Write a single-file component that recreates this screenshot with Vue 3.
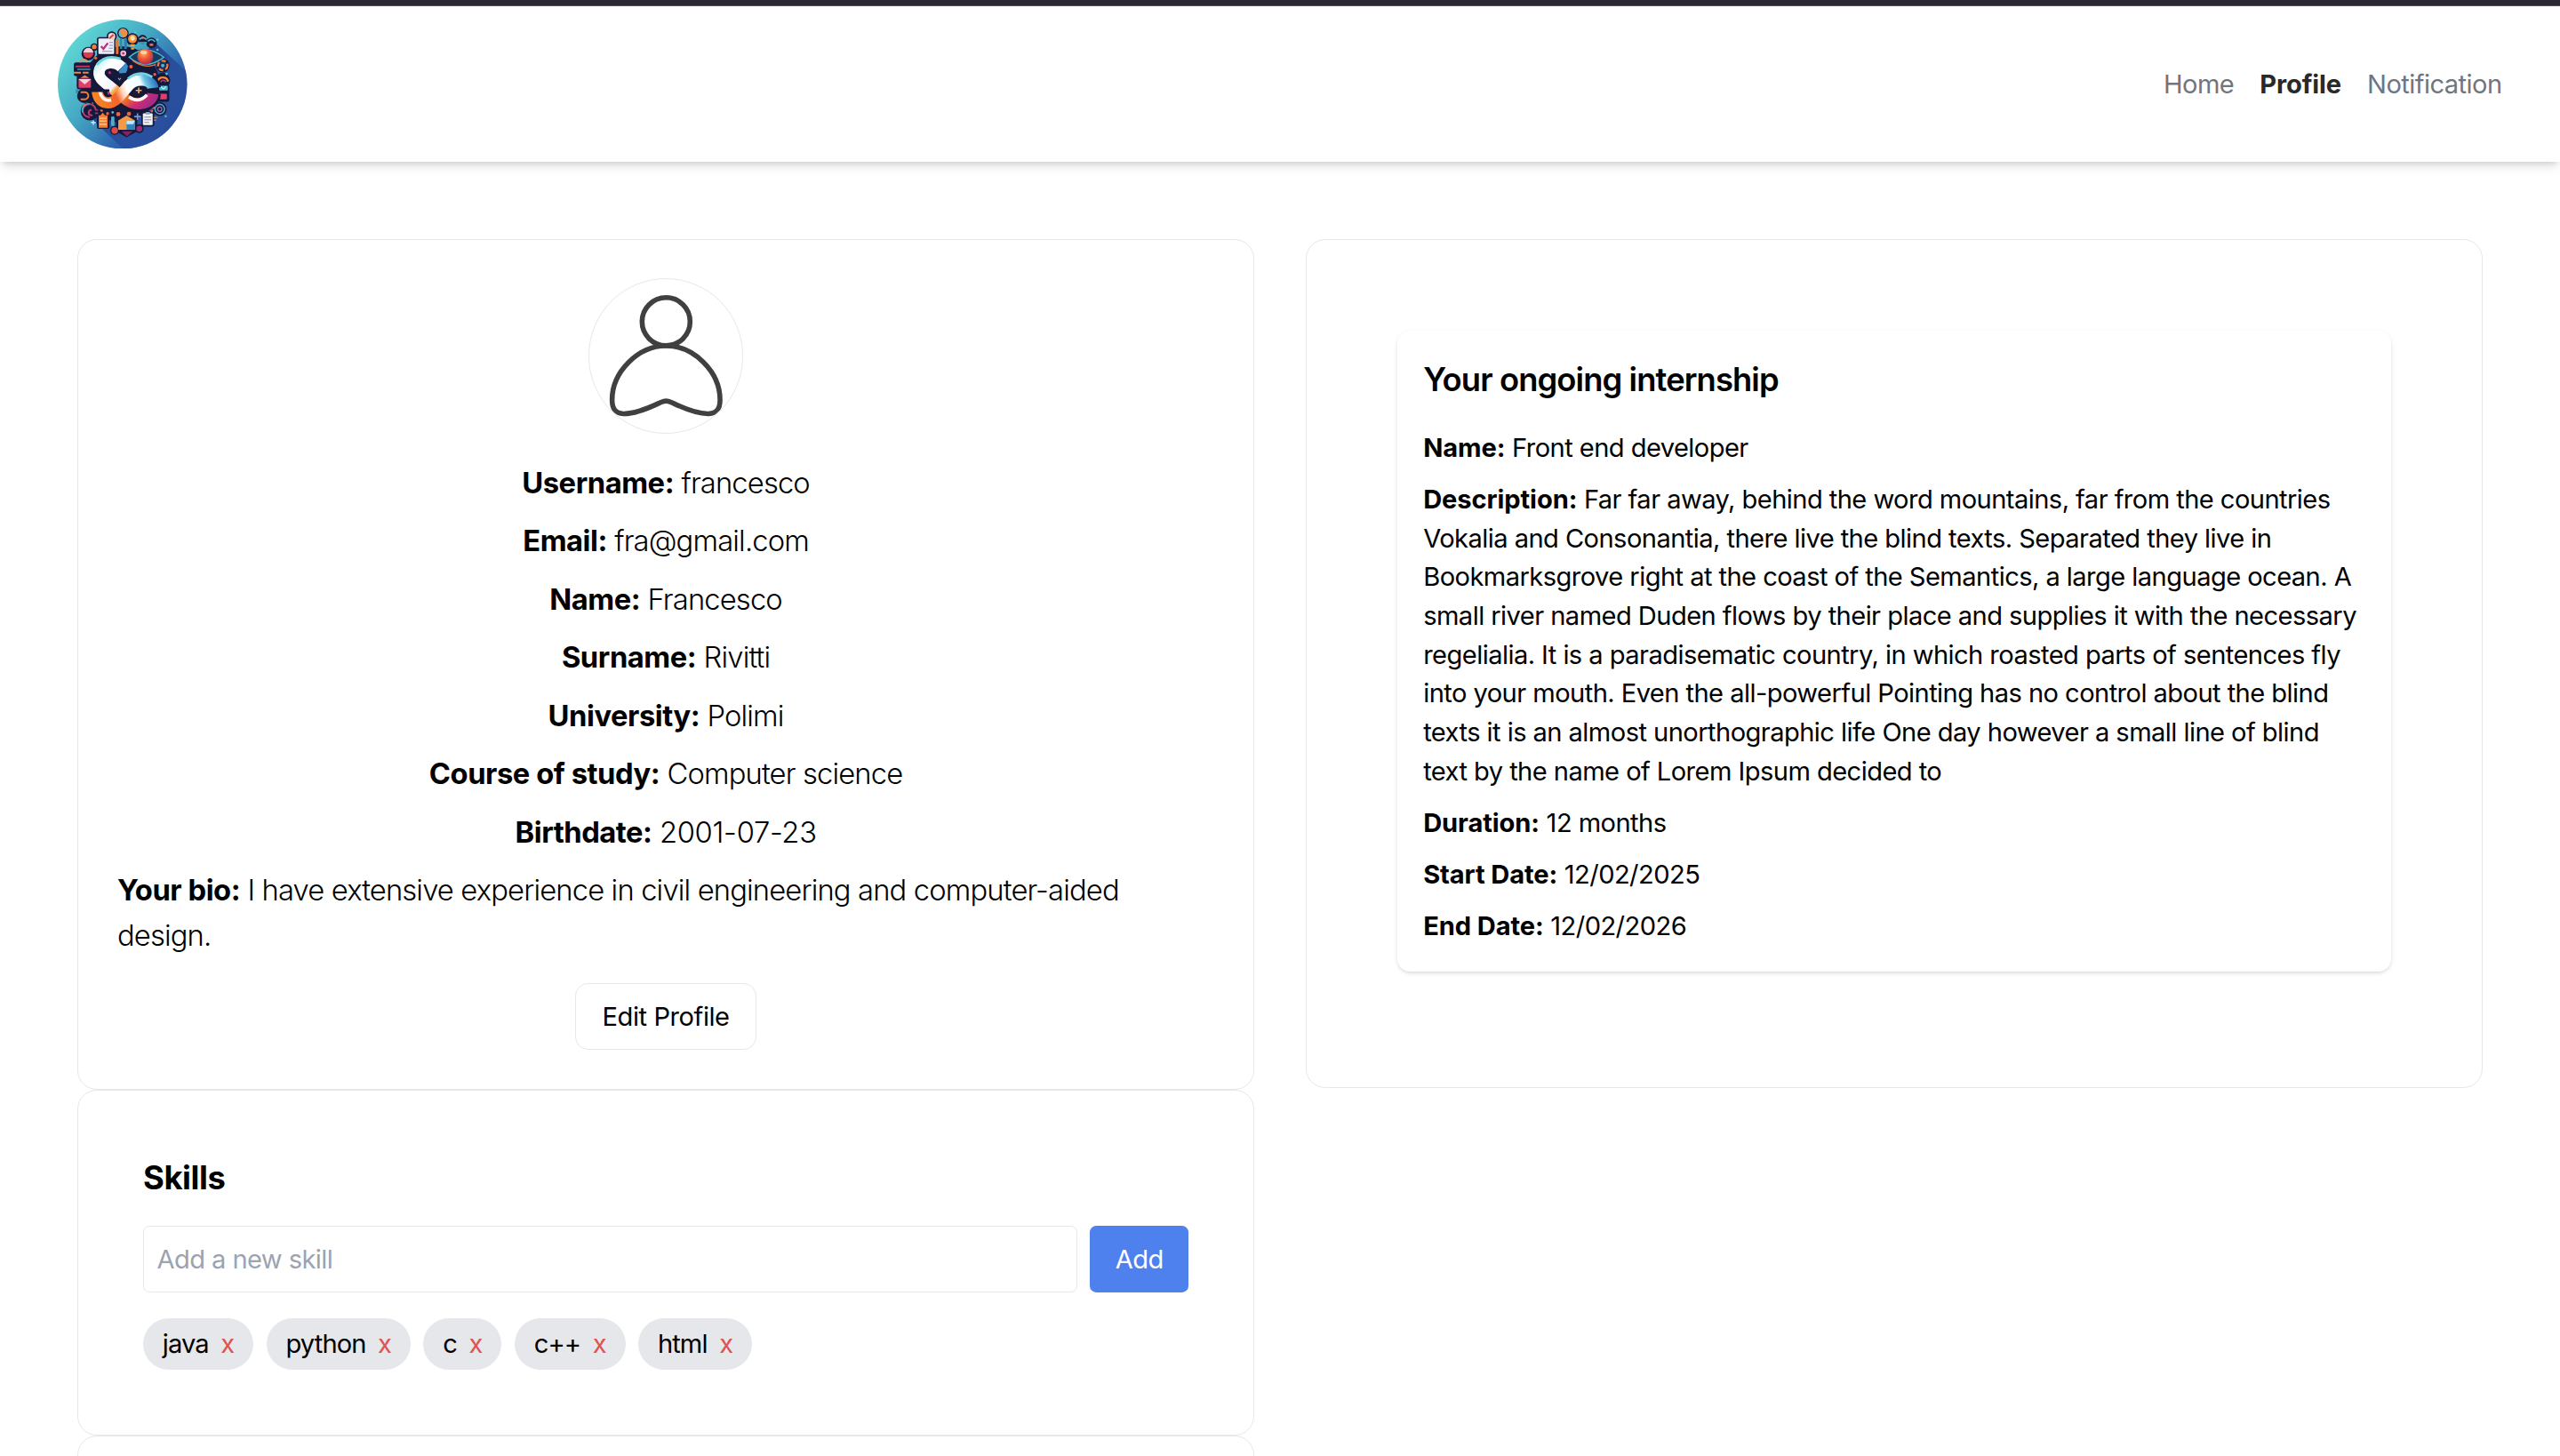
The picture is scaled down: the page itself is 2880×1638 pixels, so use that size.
<script setup>
import { ref } from 'vue'

const links = [
  { label: 'Home', active: false },
  { label: 'Profile', active: true },
  { label: 'Notification', active: false },
]

const profile = [
  ['Username:', 'francesco'],
  ['Email:', 'fra@gmail.com'],
  ['Name:', 'Francesco'],
  ['Surname:', 'Rivitti'],
  ['University:', 'Polimi'],
  ['Course of study:', 'Computer science'],
]

const description = [
  'Far far away, behind the word mountains, far from the countries',
  'Vokalia and Consonantia, there live the blind texts. Separated they live in',
  'Bookmarksgrove right at the coast of the Semantics, a large language ocean. A',
  'small river named Duden flows by their place and supplies it with the necessary',
  'regelialia. It is a paradisematic country, in which roasted parts of sentences fly',
  'into your mouth. Even the all-powerful Pointing has no control about the blind',
  'texts it is an almost unorthographic life One day however a small line of blind',
  'text by the name of Lorem Ipsum decided to',
]

const skills = ref(['java', 'python', 'c', 'c++', 'html'])
const newSkill = ref('')

function addSkill() {
  const name = newSkill.value.trim()
  if (name) skills.value.push(name)
  newSkill.value = ''
}

function removeSkill(index) {
  skills.value.splice(index, 1)
}
</script>

<template>
  <div class="page">
    <header class="navbar">
      <svg class="logo" viewBox="10 5 436 436">
        <defs>
          <linearGradient id="sky" x1="0.08" y1="0.15" x2="0.92" y2="0.85">
            <stop offset="0" stop-color="#62dcd6" />
            <stop offset="0.4" stop-color="#45a9c4" />
            <stop offset="0.7" stop-color="#2f69b0" />
            <stop offset="1" stop-color="#263f93" />
          </linearGradient>
          <linearGradient id="shade" x1="0" y1="0" x2="1" y2="1">
            <stop offset="0.3" stop-color="#24408f" />
            <stop offset="1" stop-color="#2c57a6" stop-opacity="0.35" />
          </linearGradient>
          <linearGradient id="ribbonDown" gradientUnits="userSpaceOnUse" x1="160" y1="140" x2="320" y2="300">
            <stop offset="0" stop-color="#c9f1f5" />
            <stop offset="0.12" stop-color="#ffffff" />
            <stop offset="0.4" stop-color="#f4f2fb" />
            <stop offset="0.46" stop-color="#f9a13c" />
            <stop offset="0.68" stop-color="#f06a26" />
            <stop offset="0.82" stop-color="#cf2d72" />
            <stop offset="1" stop-color="#a02a8a" />
          </linearGradient>
          <linearGradient id="ribbonUp" gradientUnits="userSpaceOnUse" x1="130" y1="290" x2="335" y2="200">
            <stop offset="0" stop-color="#f58a25" />
            <stop offset="0.36" stop-color="#f4632a" />
            <stop offset="0.48" stop-color="#ffd9bd" />
            <stop offset="0.56" stop-color="#ffffff" />
            <stop offset="0.78" stop-color="#eefbff" />
            <stop offset="0.85" stop-color="#6fc7e4" />
            <stop offset="1" stop-color="#2b74bd" />
          </linearGradient>
          <radialGradient id="iris" cx="0.4" cy="0.3" r="0.8">
            <stop offset="0" stop-color="#ffb45e" />
            <stop offset="0.45" stop-color="#ef5635" />
            <stop offset="1" stop-color="#a11f58" />
          </radialGradient>
          <clipPath id="disc"><circle cx="228" cy="223" r="218" /></clipPath>
        </defs>
        <g clip-path="url(#disc)">
          <rect width="456" height="450" fill="url(#sky)" />
          <path d="M335 80L456 190V450H240L130 345Z" fill="url(#shade)" />
          <g fill="#151a3c">
            <circle cx="225" cy="223" r="128" />
            <rect x="142" y="64" width="62" height="64" rx="8" />
            <circle cx="192" cy="62" r="17" />
            <circle cx="230" cy="51" r="19" />
            <circle cx="262" cy="72" r="21" />
            <circle cx="296" cy="72" r="15" />
            <circle cx="326" cy="84" r="18" />
            <path d="M246 132Q305 76 374 132Q305 188 246 132Z" />
            <circle cx="364" cy="160" r="23" />
            <circle cx="364" cy="210" r="25" />
            <rect x="346" y="224" width="40" height="58" rx="8" />
            <circle cx="354" cy="307" r="23" />
            <rect x="292" y="314" width="44" height="52" rx="7" />
            <path d="M206 330h72v52l-36 20l-36-20Z" />
            <circle cx="285" cy="373" r="15" />
            <circle cx="202" cy="379" r="15" />
            <rect x="142" y="316" width="42" height="58" rx="8" />
            <circle cx="118" cy="314" r="31" />
            <circle cx="100" cy="262" r="25" />
            <rect x="74" y="190" width="54" height="50" rx="8" />
            <rect x="64" y="150" width="66" height="46" rx="8" />
            <circle cx="113" cy="120" r="23" />
            <circle cx="133" cy="98" r="13" />
          </g>

          <!-- small objects scattered round the mark -->
          <rect x="147" y="69" width="53" height="52" rx="3" fill="#eeeefa" />
          <path d="M156 95l8 9l15-20" fill="none" stroke="#b8327b" stroke-width="7" />
          <path d="M184 82h12M184 92h12M160 112h34M182 102h14" stroke="#8790b8" stroke-width="3" />
          <circle cx="192" cy="62" r="12" fill="#f0d4cc" />
          <path d="M184 69l14-13" stroke="#d4454d" stroke-width="6" />
          <circle cx="230" cy="51" r="15" fill="#57b8cf" />
          <path d="M218 42a15 15 0 0 1 26 14q-4 9-14 10Z" fill="#f28b43" />
          <rect x="206" y="72" width="9" height="50" rx="3" fill="#ef7430" />
          <rect x="220" y="70" width="7" height="34" fill="#2d8aa5" />
          <rect x="234" y="70" width="9" height="34" fill="#3179a9" />
          <circle cx="231" cy="119" r="10" fill="#f0b9cf" />
          <circle cx="231" cy="119" r="4" fill="#a92866" />
          <circle cx="262" cy="70" r="15" fill="#f58d32" />
          <circle cx="262" cy="68" r="8" fill="#ffe0a8" />
          <path d="M254 88h16v8h-16zM257 100h10v6h-10z" fill="#f0a046" />
          <path d="M285 72q12-12 24 0M286 83h24M314 78q12-12 24 2" fill="none" stroke="#46bfd0" stroke-width="5" />
          <circle cx="296" cy="66" r="4" fill="#f17937" />
          <rect x="320" y="86" width="12" height="8" fill="#ef6a42" />

          <path d="M251 132Q305 82 368 132Q305 180 251 132Z" fill="#153c60" stroke="#48b3c8" stroke-width="5" />
          <path d="M262 143Q300 172 340 157" fill="none" stroke="#ef7838" stroke-width="4" />
          <circle cx="305" cy="130" r="27" fill="url(#iris)" />
          <ellipse cx="300" cy="116" rx="11" ry="6" fill="#ffd0a0" />

          <circle cx="364" cy="160" r="16" fill="#1c2c57" stroke="#f07a3c" stroke-width="7" stroke-dasharray="15 8" />
          <circle cx="364" cy="160" r="6" fill="#4ab6d2" />
          <path d="M347 214a18 18 0 0 1 35 0" fill="none" stroke="#f28740" stroke-width="7" />
          <path d="M357 216a9 9 0 0 1 17 0" fill="none" stroke="#c13274" stroke-width="5" />
          <rect x="352" y="228" width="29" height="16" rx="2" fill="#49bfd1" />
          <path d="M357 231l9 8l9-8" fill="none" stroke="#d9f6fa" stroke-width="3" />
          <rect x="355" y="255" width="23" height="19" rx="2" fill="#e33d70" />
          <circle cx="354" cy="307" r="16" fill="none" stroke="#4f9fc0" stroke-width="5" />
          <circle cx="354" cy="307" r="7" fill="none" stroke="#9b6abd" stroke-width="4" />
          <path d="M334 335h12M334 344h8" stroke="#f07d38" stroke-width="4" />
          <circle cx="374" cy="331" r="4" fill="#4ab9d3" />

          <rect x="297" y="321" width="33" height="40" rx="3" fill="#f1f1f6" />
          <rect x="306" y="317" width="15" height="8" rx="2" fill="#8ca1c0" />
          <path d="M302 334h23M302 343h23M302 352h16" stroke="#8990a4" stroke-width="3" />
          <path d="M279 321v22M268 332h22" stroke="#7799d7" stroke-width="5" />
          <path d="M214 345l28-16l28 16v32h-56Z" fill="#f49a42" />
          <path d="M242 346h28v31h-28Z" fill="#3384be" />
          <path d="M242 346h28l-5 12h-23Z" fill="#bde8f4" />
          <path d="M226 382h36l-19 17Z" fill="#832364" />
          <circle cx="285" cy="373" r="10" fill="#9c2b78" />
          <circle cx="202" cy="379" r="11" fill="#e3483f" />
          <rect x="190" y="332" width="11" height="32" rx="4" fill="#49b4c9" />
          <path d="M148 328h6l8-9l7 9h9v42h-30Z" fill="#f47c34" />
          <path d="M151 338h23M151 347h23M151 358h23" stroke="#ffd28b" stroke-width="4" />

          <path d="M138 309a22 22 0 1 0-20 25M124 310a9 9 0 1 0 3 17" fill="none" stroke="#c93570" stroke-width="6" />
          <path d="M94 318a22 22 0 0 1 22-29" fill="none" stroke="#47aec7" stroke-width="5" />
          <path d="M136 310h10M136 321h10" stroke="#b82a76" stroke-width="5" />
          <path d="M130 345v15M122 352h16" stroke="#c7eaf5" stroke-width="4" />
          <path d="M87 250h14a12 12 0 0 1 0 24h-14" fill="none" stroke="#ef7b3c" stroke-width="6" />
          <path d="M71 240h8v14h-8z" fill="#398ca7" />
          <rect x="80" y="204" width="42" height="31" rx="2" fill="#e33e68" />
          <path d="M80 206h42l-21 18Z" fill="#f4d8e2" />
          <path d="M86 202l15-10l15 10Z" fill="#f28340" />
          <path d="M70 163h48" stroke="#bd315b" stroke-width="6" />
          <path d="M64 184h24M94 184h20" stroke="#ee823f" stroke-width="6" />
          <path d="M84 149a14 14 0 0 1 26 0" fill="none" stroke="#f0904c" stroke-width="6" />
          <path d="M76 173h44" stroke="#3e9ab3" stroke-width="4" />
          <circle cx="113" cy="118" r="17" fill="#d93d55" />
          <path d="M96 116q4-15 17-16q14 1 17 16Z" fill="#f4cdd2" />
          <circle cx="133" cy="97" r="8" fill="#ef8144" />

          <g fill="#ee6540">
            <circle cx="257" cy="164" r="6" /><circle cx="138" cy="135" r="5" />
            <circle cx="337" cy="190" r="5" /><circle cx="100" cy="294" r="5" />
            <circle cx="214" cy="324" r="7" /><circle cx="178" cy="322" r="5" />
            <circle cx="158" cy="311" r="5" /><circle cx="250" cy="323" r="7" />
            <circle cx="333" cy="302" r="5" /><circle cx="327" cy="314" r="4" />
          </g>
          <g fill="#55c6d8">
            <circle cx="242" cy="163" r="4" /><circle cx="346" cy="107" r="4" />
            <circle cx="130" cy="285" r="4" /><circle cx="377" cy="188" r="4" />
            <circle cx="84" cy="141" r="4" /><circle cx="195" cy="318" r="4" />
            <circle cx="341" cy="285" r="4" /><circle cx="66" cy="216" r="4" />
            <circle cx="271" cy="48" r="4" /><circle cx="346" cy="73" r="4" />
          </g>

          <!-- interlocked ribbons -->
          <g fill="none" stroke="#141835" stroke-width="54">
            <path d="M143 246C147 291 190 298 216 266L244 233C270 198 327 205 331 236" />
            <path d="M226 166C203 143 163 146 151 173C141 201 167 216 190 234L234 270C262 300 326 295 331 255" />
          </g>
          <path d="M232 268C262 300 326 295 331 255" fill="none" stroke="url(#ribbonDown)" stroke-width="38" />
          <path d="M226 166C203 143 163 146 151 173C141 201 167 216 190 234L234 270" fill="none" stroke="url(#ribbonDown)" stroke-width="38" />
          <path d="M143 246C147 291 190 298 216 266L244 233C270 198 327 205 331 236" fill="none" stroke="url(#ribbonUp)" stroke-width="38" />
          <path d="M215 180L240 149Q250 170 240 185L219 186Z" fill="#3a8fcb" />
          <path d="M142 158Q170 120 222 137" fill="none" stroke="#6bd5de" stroke-width="8" />
          <path d="M246 205Q284 172 329 199" fill="none" stroke="#72d4e4" stroke-width="8" />
          <path d="M151 246Q160 283 190 276M250 266Q282 289 311 259" fill="none" stroke="#fff4ee" stroke-width="11" />
          <path d="M120 245h64M296 244h56" stroke="#141835" stroke-width="9" />
          <path d="M283 234v20M273 244h20" stroke="#f8a75a" stroke-width="5" />
          <circle cx="185" cy="184" r="5" fill="#a72d81" />
          <circle cx="182" cy="254" r="5" fill="#a72d81" />
          <path d="M214 202l4 6l5-6" fill="none" stroke="#74c9dc" stroke-width="3" />
        </g>
      </svg>
      <nav class="links">
        <a v-for="link in links" :key="link.label" :class="{ active: link.active }">{{ link.label }}</a>
      </nav>
    </header>

    <main class="grid">
      <div class="column">
        <section class="card profile">
          <svg class="avatar" viewBox="662.7 314.2 172.5 172.5">
            <g fill="none" stroke="#404042" stroke-width="5.6" stroke-linejoin="round">
              <circle cx="749" cy="362" r="27" />
              <path d="M749 389.2C718 389.2 688.3 418 688.3 450C688.3 460 692 465.3 701 465.6C717 466 735 456.5 743.5 452.6Q749 450 754.5 452.6C763 456.5 781 466 797 465.6C806 465.3 809.7 460 809.7 450C809.7 418 780 389.2 749 389.2Z" />
            </g>
          </svg>
          <p v-for="[label, value] in profile" :key="label" class="row">
            <strong>{{ label }}</strong> {{ value }}
          </p>
          <p class="row"><strong>Birthdate:</strong> <span class="date">2001-07-23</span></p>
          <p class="bio">
            <strong>Your bio:</strong> I have extensive experience in civil engineering and computer-aided<br />design.
          </p>
          <button class="edit">Edit Profile</button>
        </section>

        <section class="card skills">
          <h2>Skills</h2>
          <form class="add-row" @submit.prevent="addSkill">
            <input v-model="newSkill" type="text" placeholder="Add a new skill" />
            <button>Add</button>
          </form>
          <ul class="chips">
            <li v-for="(skill, i) in skills" :key="skill">
              {{ skill }}<span class="remove" @click="removeSkill(i)">x</span>
            </li>
          </ul>
        </section>

        <section class="card next"></section>
      </div>

      <section class="card internship-area">
        <article class="internship">
          <h2>Your ongoing internship</h2>
          <p><strong>Name:</strong> Front end developer</p>
          <p>
            <strong>Description:</strong>&nbsp;<template v-for="(line, i) in description" :key="i">{{ line }}<br v-if="i < description.length - 1" /></template>
          </p>
          <p><strong>Duration:</strong> 12 months</p>
          <p><strong>Start Date:</strong> 12/02/2025</p>
          <p><strong>End Date:</strong> 12/02/2026</p>
        </article>
      </section>
    </main>
  </div>
</template>

<style>
html,
body {
  background: #fff;
  overflow: hidden;
}
</style>

<style scoped>
* {
  box-sizing: border-box;
  margin: 0;
  padding: 0;
}

.page {
  height: 1638px;
  overflow: hidden;
  border-top: 6px solid #2b2833;
  background: #fff;
  color: #000;
  font: 400 29.09px/43.64px Inter, "Liberation Sans", sans-serif;
  letter-spacing: -0.019em;
}

.navbar {
  display: flex;
  align-items: center;
  justify-content: space-between;
  height: 176px;
  padding: 0 65.45px;
  border-top: 1px solid #54515c;
  background: #fff;
  box-shadow: 0 7px 11px -2px rgb(0 0 0 / 0.12), 0 4px 7px -4px rgb(0 0 0 / 0.14);
}

.logo {
  width: 145.45px;
  height: 145.45px;
}

.links {
  display: flex;
  gap: 29.09px;
  color: #6f767f;
}

.links .active {
  color: #292929;
  font-weight: 700;
  letter-spacing: -0.005em;
}

.grid {
  display: grid;
  grid-template-columns: 1fr 1fr;
  align-items: start;
  gap: 58.18px;
  padding: 87.3px 87.3px 0;
}

.card {
  border: 1px solid #e5e7eb;
  border-radius: 21.8px;
}

.profile {
  display: flex;
  flex-direction: column;
  align-items: center;
  height: 956.6px;
  padding: 43.2px 43.64px;
  font-size: 32.73px;
  font-weight: 300;
  line-height: 50.91px;
  letter-spacing: -0.026em;
}

strong {
  font-weight: 700;
  letter-spacing: -0.003em;
}

.profile strong {
  letter-spacing: -0.014em;
}

.avatar {
  flex: none;
  width: 174.55px;
  height: 174.55px;
  margin-bottom: 30px;
  border: 1px solid #e5e7eb;
  border-radius: 50%;
}

.row {
  margin-bottom: 14.55px;
}

.date {
  letter-spacing: -0.009em;
}

.bio {
  align-self: flex-start;
  white-space: nowrap;
}

.edit {
  height: 74.7px;
  margin-top: 28px;
  padding: 1px 29.09px 0;
  border: 1px solid #e5e7eb;
  border-radius: 14.5px;
  background: #fff;
  color: #000;
  font: 400 29.09px/43.64px Inter, "Liberation Sans", sans-serif;
  letter-spacing: -0.015em;
}

.skills {
  height: 389.3px;
  padding: 72.73px;
}

h2 {
  margin-bottom: 29.09px;
  font-size: 36.36px;
  font-weight: 600;
  line-height: 50.91px;
  letter-spacing: -0.025em;
}

.skills h2 {
  margin-bottom: 27.6px;
  padding-top: 0.8px;
  font-weight: 700;
  letter-spacing: -0.011em;
}

.add-row {
  display: flex;
  gap: 14.55px;
  height: 74.7px;
}

.add-row input {
  flex: 1;
  min-width: 0;
  padding: 1px 14.55px 0;
  border: 1px solid #e5e7eb;
  border-radius: 7.27px;
  background: #fff;
  font: inherit;
  letter-spacing: -0.02em;
}

.add-row input::placeholder {
  color: #9ca3af;
}

.add-row button {
  width: 111px;
  padding-top: 1px;
  border: 0;
  border-radius: 7.27px;
  background: #4f81ee;
  color: #fff;
  font: inherit;
  letter-spacing: -0.018em;
}

.chips {
  display: flex;
  gap: 14.55px;
  margin-top: 29.6px;
  list-style: none;
}

.chips li {
  height: 58.18px;
  padding: 7.27px 21.82px;
  border-radius: 29.09px;
  background: #e5e7eb;
  letter-spacing: -0.03em;
}

.remove {
  margin-left: 13.5px;
  color: #df5350;
}

.next {
  height: 300px;
}

.internship-area {
  height: 955px;
  padding: 102px;
}

.internship {
  height: 720.4px;
  padding: 29.7px 29.09px 0;
  border-radius: 14.5px;
  background: #fff;
  box-shadow: 0 2px 5.5px 0 rgb(0 0 0 / 0.1), 0 2px 4px -2px rgb(0 0 0 / 0.1);
  white-space: nowrap;
}

.internship p + p {
  margin-top: 14.55px;
}
</style>
